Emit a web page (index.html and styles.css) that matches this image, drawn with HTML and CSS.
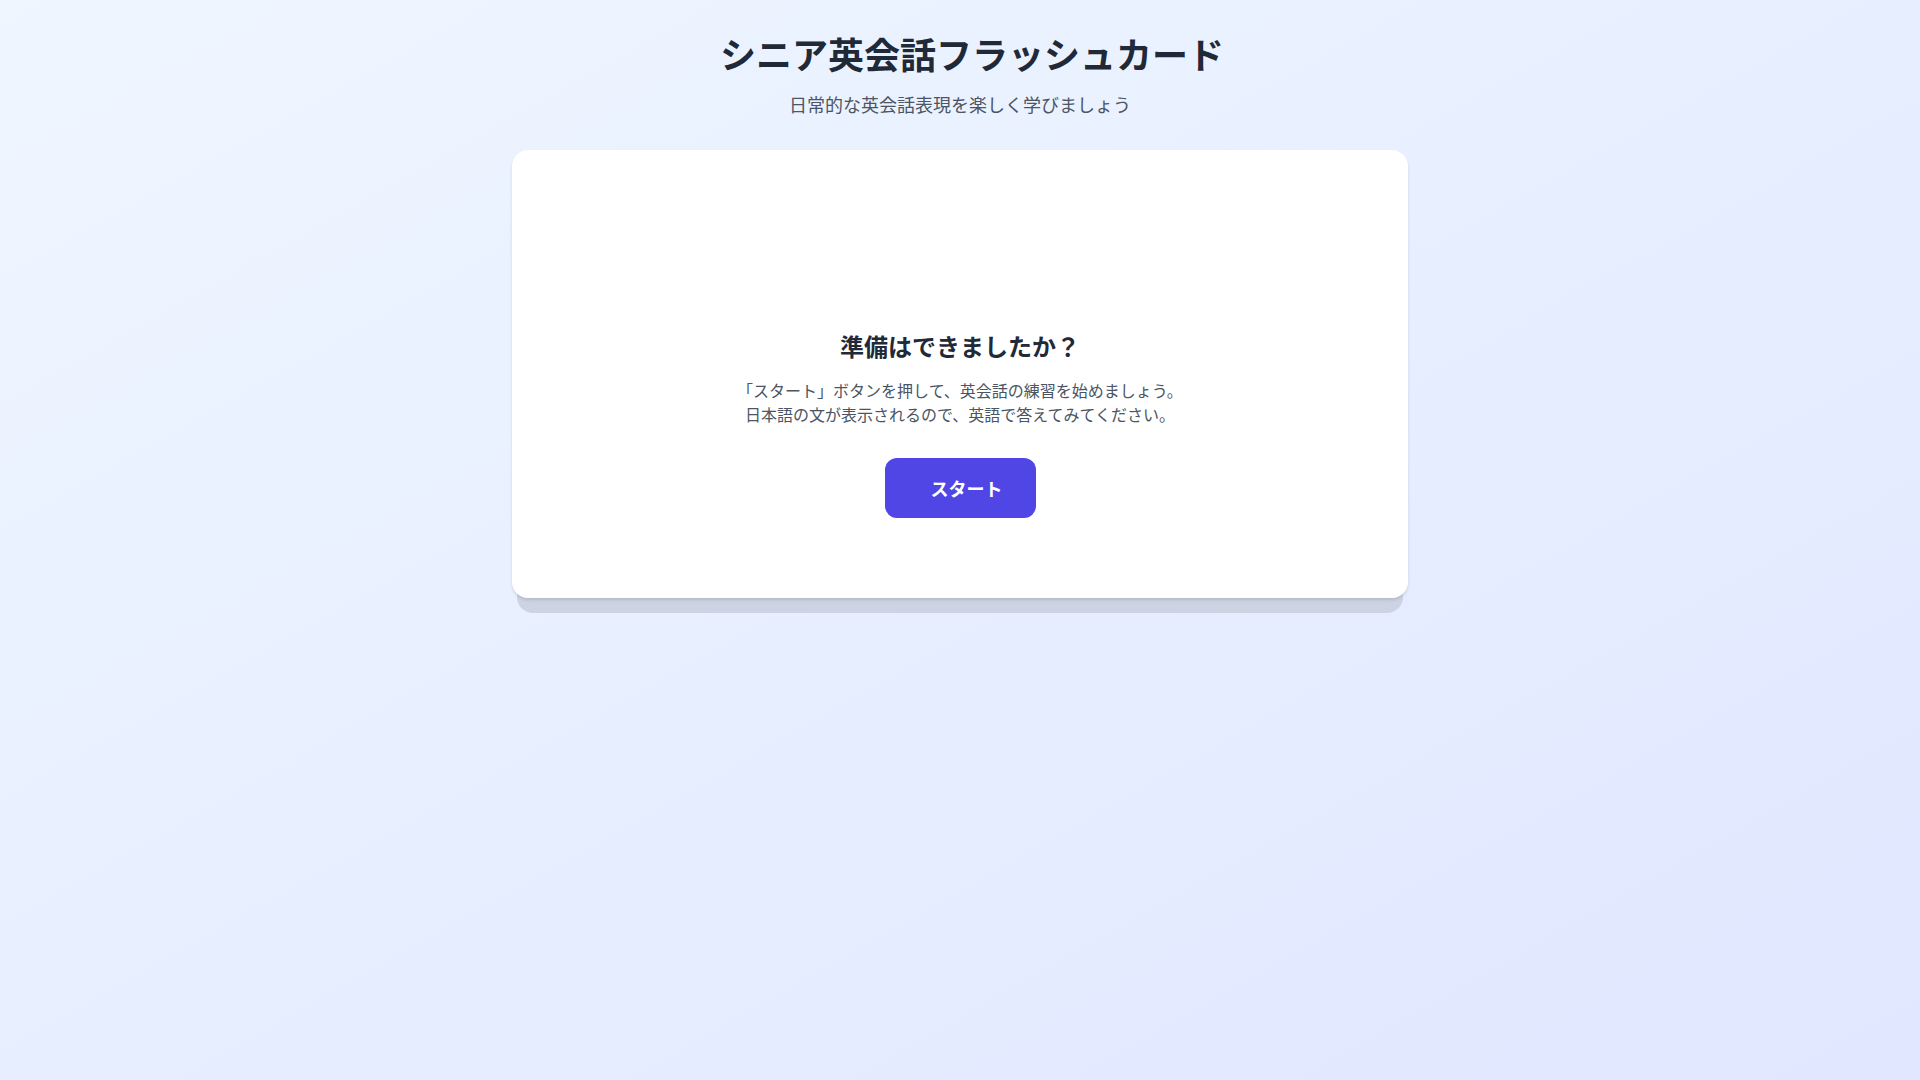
FILE: index.html
```html
<!DOCTYPE html>
<html lang="ja">

<head>
    <meta charset="UTF-8">
    <meta name="viewport" content="width=device-width, initial-scale=1.0">
    <title>シニア英会話フラッシュカード</title>
    <link rel="stylesheet" href="styles.css">
</head>

<body>
    <div class="page">
        <header class="header">
            <h1>シニア英会話フラッシュカード</h1>
            <p>日常的な英会話表現を楽しく学びましょう</p>
        </header>

        <div class="card-stack">
            <div class="card-back"></div>
            <div class="card">
                <h2>準備はできましたか？</h2>
                <p class="intro">
                    「スタート」ボタンを押して、英会話の練習を始めましょう。<br>
                    日本語の文が表示されるので、英語で答えてみてください。
                </p>
                <button class="start-btn">スタート</button>
            </div>
        </div>
    </div>
</body>

</html>
```

FILE: styles.css
```css
* {
    box-sizing: border-box;
}

html,
body {
    margin: 0;
    padding: 0;
}

body {
    min-height: 100vh;
    font-family: "Noto Sans CJK JP", "Noto Sans", sans-serif;
    background: linear-gradient(to bottom right, #eff6ff, #e0e7ff);
    color: #1f2937;
}

.page {
    display: flex;
    flex-direction: column;
    align-items: center;
    padding-top: 33px;
}

.header {
    text-align: center;
    margin-bottom: 32px;
}

.header h1 {
    margin: 0;
    padding-left: 24px;
    font-size: 36px;
    line-height: 40px;
    font-weight: 700;
    color: #1f2937;
}

.header p {
    margin: 17px 0 0;
    font-size: 18px;
    line-height: 28px;
    color: #4b5563;
}

.card-stack {
    position: relative;
    width: 896px;
}

.card-back {
    position: absolute;
    left: 5px;
    right: 5px;
    bottom: -15px;
    height: 60px;
    border-radius: 16px;
    background-color: #cdd3e3;
}

.card {
    position: relative;
    height: 448px;
    padding: 100px 48px 0;
    display: flex;
    flex-direction: column;
    align-items: center;
    justify-content: center;
    background-color: #ffffff;
    border-radius: 16px;
    box-shadow: 0 2px 3px rgba(15, 23, 42, 0.12);
    text-align: center;
}

.card h2 {
    margin: 0;
    font-size: 24px;
    line-height: 32px;
    font-weight: 700;
    color: #1f2937;
}

.intro {
    margin: 16px 0 0;
    font-size: 16px;
    line-height: 24px;
    color: #4b5563;
}

.start-btn {
    margin-top: 32px;
    padding: 16px 33px 16px 46px;
    border: none;
    border-radius: 12px;
    background-color: #4f46e5;
    color: #ffffff;
    font-family: inherit;
    font-size: 18px;
    line-height: 28px;
    font-weight: 700;
    cursor: pointer;
}

.start-btn:hover {
    background-color: #4338ca;
}
```
